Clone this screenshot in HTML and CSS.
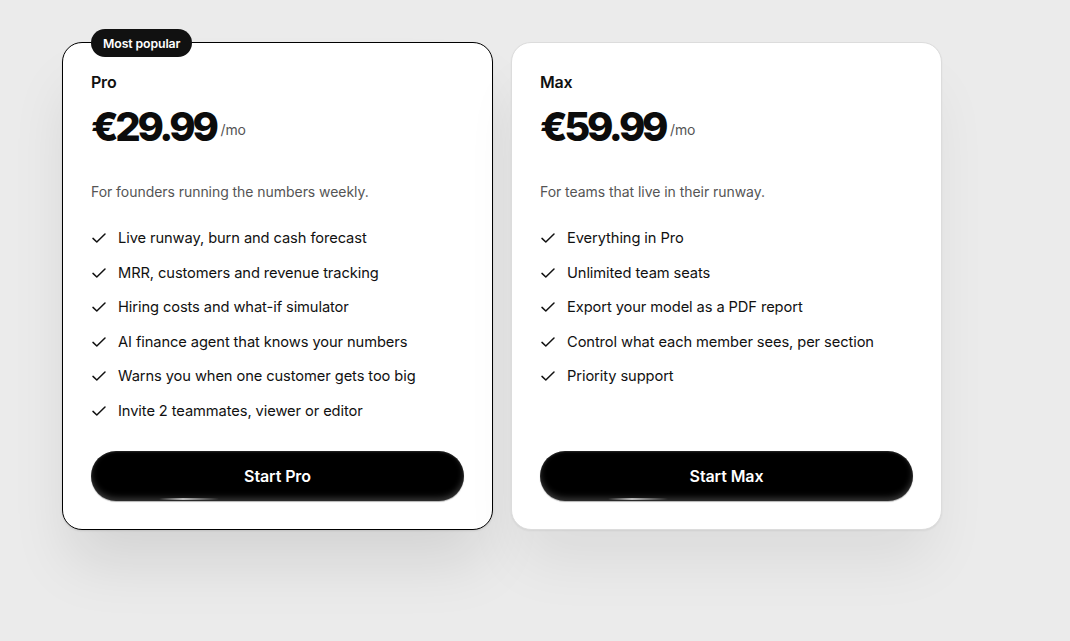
FILE: index.html
```html
<!DOCTYPE html>
<html lang="en">
<head>
<meta charset="utf-8">
<title>Pricing</title>
<link rel="stylesheet" href="styles.css">
</head>
<body>
<main class="plans">
  <section class="plan plan--featured">
    <span class="badge">Most popular</span>
    <h3 class="plan-name">Pro</h3>
    <div class="price"><span class="amount">€29.99</span><span class="period">/mo</span></div>
    <p class="tagline">For founders running the numbers weekly.</p>
    <ul class="features">
      <li><svg class="check" viewBox="0 0 16 16"><path d="M2 8.4l3.8 3.6L14 4"/></svg>Live runway, burn and cash forecast</li>
      <li><svg class="check" viewBox="0 0 16 16"><path d="M2 8.4l3.8 3.6L14 4"/></svg>MRR, customers and revenue tracking</li>
      <li><svg class="check" viewBox="0 0 16 16"><path d="M2 8.4l3.8 3.6L14 4"/></svg>Hiring costs and what-if simulator</li>
      <li><svg class="check" viewBox="0 0 16 16"><path d="M2 8.4l3.8 3.6L14 4"/></svg>AI finance agent that knows your numbers</li>
      <li><svg class="check" viewBox="0 0 16 16"><path d="M2 8.4l3.8 3.6L14 4"/></svg>Warns you when one customer gets too big</li>
      <li><svg class="check" viewBox="0 0 16 16"><path d="M2 8.4l3.8 3.6L14 4"/></svg>Invite 2 teammates, viewer or editor</li>
    </ul>
    <button class="cta">Start Pro</button>
  </section>
  <section class="plan">
    <h3 class="plan-name">Max</h3>
    <div class="price"><span class="amount">€59.99</span><span class="period">/mo</span></div>
    <p class="tagline">For teams that live in their runway.</p>
    <ul class="features">
      <li><svg class="check" viewBox="0 0 16 16"><path d="M2 8.4l3.8 3.6L14 4"/></svg>Everything in Pro</li>
      <li><svg class="check" viewBox="0 0 16 16"><path d="M2 8.4l3.8 3.6L14 4"/></svg>Unlimited team seats</li>
      <li><svg class="check" viewBox="0 0 16 16"><path d="M2 8.4l3.8 3.6L14 4"/></svg>Export your model as a PDF report</li>
      <li><svg class="check" viewBox="0 0 16 16"><path d="M2 8.4l3.8 3.6L14 4"/></svg>Control what each member sees, per section</li>
      <li><svg class="check" viewBox="0 0 16 16"><path d="M2 8.4l3.8 3.6L14 4"/></svg>Priority support</li>
    </ul>
    <button class="cta">Start Max</button>
  </section>
</main>
</body>
</html>
```
FILE: styles.css
```css
* { box-sizing: border-box; }

html, body {
  margin: 0;
  height: 100%;
}

body {
  background: #ebebeb;
  font-family: Inter, "Noto Sans", sans-serif;
  color: #111;
}

.plans {
  display: flex;
  gap: 18px;
  align-items: stretch;
  padding: 42px 0 0 62px;
}

.plan {
  position: relative;
  width: 431px;
  height: 488px;
  flex: none;
  display: flex;
  flex-direction: column;
  padding: 28px;
  background: #fff;
  border: 1px solid #dcdcdc;
  border-radius: 20px;
  box-shadow: 0 1px 2px rgba(0,0,0,0.06), 0 40px 60px -10px rgba(0,0,0,0.07);
}

.plan--featured {
  border-color: #000;
  box-shadow: 0 1px 2px rgba(0,0,0,0.1), 0 40px 60px -8px rgba(0,0,0,0.10);
}

.badge {
  position: absolute;
  top: -14px;
  left: 28px;
  height: 28px;
  padding: 0 12px;
  display: flex;
  align-items: center;
  background: #111;
  color: #fff;
  border-radius: 14px;
  font-size: 12.3px;
  font-weight: 600;
  letter-spacing: -0.1px;
}

.plan-name {
  margin: 1px 0 0;
  font-size: 16px;
  line-height: 20px;
  font-weight: 600;
  letter-spacing: -0.2px;
}

.price {
  display: flex;
  align-items: center;
  gap: 5px;
  margin-top: 12px;
  height: 46px;
}

.amount {
  font-size: 40px;
  line-height: 46px;
  font-weight: 800;
  letter-spacing: -3.4px;
  color: #0c0c0c;
}

.period {
  padding-top: 6px;
  font-size: 14px;
  line-height: 14px;
  color: #555;
  letter-spacing: -0.1px;
}

.tagline {
  margin: 31px 0 0;
  font-size: 14px;
  line-height: 22px;
  color: #555;
  letter-spacing: -0.05px;
}

.features {
  list-style: none;
  margin: 24px 0 0;
  padding: 0;
  display: flex;
  flex-direction: column;
  gap: 12.6px;
}

.features li {
  display: flex;
  align-items: center;
  gap: 11px;
  font-size: 14.7px;
  line-height: 22px;
  color: #111;
  letter-spacing: -0.1px;
}

.check {
  width: 16px;
  height: 16px;
  flex: none;
  fill: none;
  stroke: #111;
  stroke-width: 1.5;
  stroke-linecap: round;
  stroke-linejoin: round;
}

.cta {
  position: relative;
  margin-top: auto;
  height: 50px;
  width: 100%;
  border: none;
  border-radius: 25px;
  background: #000;
  color: #fff;
  font-family: inherit;
  font-size: 16px;
  font-weight: 600;
  letter-spacing: -0.1px;
  cursor: pointer;
  box-shadow: inset 0 -3px 6px rgba(255,255,255,0.22), inset 0 1px 2px rgba(255,255,255,0.12), 0 1px 1px rgba(0,0,0,0.3);
}

/* thin glint along the lower edge of the button */
.cta::after {
  content: "";
  position: absolute;
  left: 68px;
  bottom: 1px;
  width: 60px;
  height: 2px;
  border-radius: 1px;
  background: linear-gradient(90deg, rgba(255,255,255,0), rgba(255,255,255,0.7) 40%, rgba(255,255,255,0));
}
```
